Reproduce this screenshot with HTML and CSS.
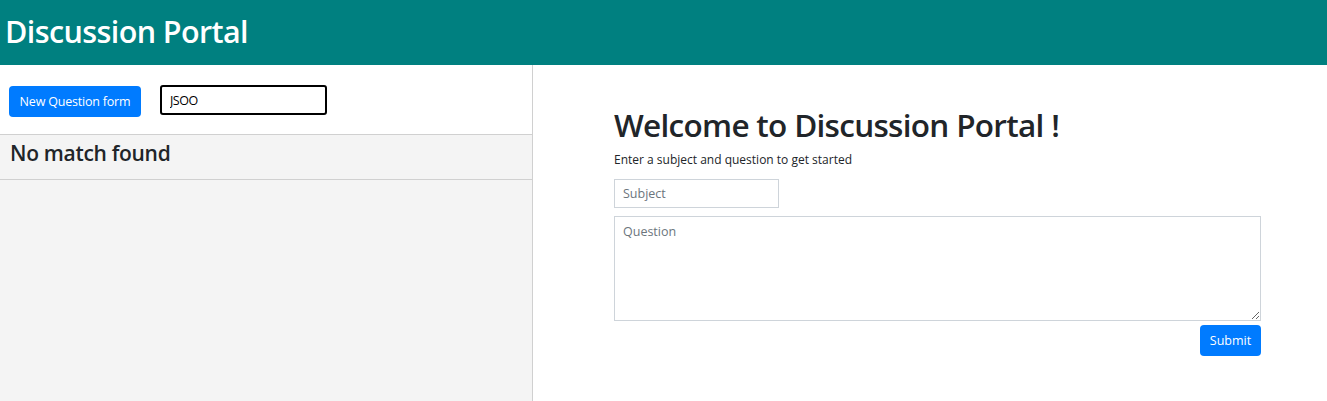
FILE: index.html
```html
<!DOCTYPE html>
<html>
<head>
<meta charset="utf-8">
<link rel="stylesheet" href="styles.css">
</head>
<body>
<header class="topbar"><span class="brand">Discussion Portal</span></header>
<main class="layout">
  <aside class="sidebar">
    <div class="toolbar">
      <button class="btn btn-new">New Question form</button>
      <input class="search" type="text" value="JSOO">
    </div>
    <div class="result">No match found</div>
  </aside>
  <section class="content">
    <h1 class="title">Welcome to Discussion Portal !</h1>
    <p class="subtitle">Enter a subject and question to get started</p>
    <input class="subject" type="text" placeholder="Subject">
    <textarea class="question" placeholder="Question"></textarea>
    <div class="actions"><button class="btn btn-submit">Submit</button></div>
  </section>
</main>
</body>
</html>
```

FILE: styles.css
```css
* { box-sizing: border-box; }
html, body { margin: 0; height: 100%; }
body {
  font-family: "Open Sans", "Noto Sans", sans-serif;
  color: #212529;
  background: #fff;
  display: flex;
  flex-direction: column;
}
.topbar {
  height: 65px;
  background: #008080;
  display: flex;
  align-items: center;
  padding-left: 5px;
}
.brand {
  color: #fff;
  font-size: 30.5px;
  font-weight: 600;
  letter-spacing: -0.6px;
  margin-top: -4px;
}
.layout {
  flex: 1;
  display: flex;
}
.sidebar {
  width: 533px;
  border-right: 1px solid #d0d0d0;
  background: #f4f4f4;
  display: flex;
  flex-direction: column;
}
.toolbar {
  background: #fff;
  height: 70px;
  border-bottom: 1px solid #d0d0d0;
  display: flex;
  align-items: center;
  padding-left: 9px;
  gap: 19px;
}
.btn {
  font-family: inherit;
  border: none;
  background: #007bff;
  color: #fff;
  border-radius: 4px;
  cursor: pointer;
}
.btn-new {
  width: 132px;
  height: 31px;
  font-size: 12.5px;
  margin-top: 3px;
  padding: 0;
  letter-spacing: -0.2px;
}
.search {
  width: 167px;
  height: 30px;
  border: 2px solid #000;
  border-radius: 3px;
  font-family: inherit;
  font-size: 12.5px;
  padding: 2px 8px 0;
  outline: none;
  letter-spacing: -0.5px;
}
.result {
  height: 45px;
  border-bottom: 1px solid #d0d0d0;
  padding-left: 10px;
  font-size: 21px;
  font-weight: 600;
  line-height: 36px;
  letter-spacing: -0.3px;
}
.content {
  flex: 1;
  padding: 38px 66px 0 81px;
  display: flex;
  flex-direction: column;
}
.title {
  margin: 0;
  font-size: 31.5px;
  font-weight: 600;
  line-height: 44px;
  letter-spacing: -0.7px;
}
.subtitle {
  margin: 5px 0 11px;
  font-size: 12px;
  line-height: 16px;
}
.subject {
  width: 165px;
  height: 29px;
  border: 1px solid #ced4da;
  font-family: inherit;
  font-size: 12.5px;
  padding: 0 8px;
  color: #495057;
}
.question {
  margin-top: 8px;
  width: 100%;
  height: 105px;
  border: 1px solid #ced4da;
  font-family: inherit;
  font-size: 12.5px;
  padding: 6px 8px;
  resize: vertical;
}
.subject::placeholder, .question::placeholder { color: #6c757d; }
.actions {
  display: flex;
  justify-content: flex-end;
  margin-top: 4px;
}
.btn-submit {
  width: 61px;
  height: 31px;
  font-size: 12.5px;
  padding: 0;
}
```
